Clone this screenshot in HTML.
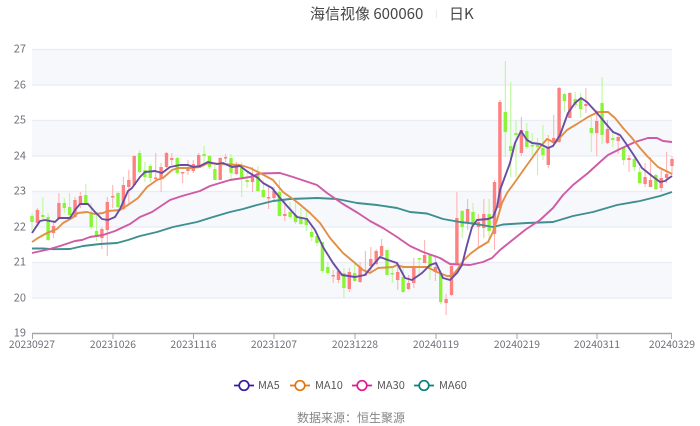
<!DOCTYPE html>
<html><head><meta charset="utf-8"><style>
html,body{margin:0;padding:0;background:#fff}
svg{display:block;filter:blur(.3px)}
text{font-family:"Noto Sans CJK SC","Liberation Sans",sans-serif}
</style></head><body>
<svg width="700" height="426" viewBox="0 0 700 426" xmlns="http://www.w3.org/2000/svg">
<rect width="700" height="426" fill="#fff"/>
<g fill="#f6f8fc">
<rect x="32" y="49.5" width="640" height="35.5"/>
<rect x="32" y="120.5" width="640" height="35.5"/>
<rect x="32" y="191.5" width="640" height="35.5"/>
<rect x="32" y="262.5" width="640" height="35.5"/>
</g>
<g stroke="#e8ecf5" stroke-width="1.2" fill="none">
<path d="M32 49.5H672M32 85H672M32 120.5H672M32 156H672M32 191.5H672M32 227H672M32 262.5H672M32 298H672"/>
</g>
<path d="M32 333.500H672" stroke="#a5a5a8" stroke-width="1.6" fill="none"/>
<path d="M32.5 334v5M113 334v5M193.5 334v5M274 334v5M355 334v5M436 334v5M517 334v5M597 334v5M671.500 334v5" stroke="#a5a5a8" stroke-width="1" fill="none"/>

<g font-size="11" fill="#6e7079" text-anchor="end">
<text x="26" y="52.500">27</text><text x="26" y="88.500">26</text><text x="26" y="123.500">25</text><text x="26" y="159.500">24</text>
<text x="26" y="194.500">23</text><text x="26" y="230.500">22</text><text x="26" y="265.500">21</text><text x="26" y="301.500">20</text><text x="26" y="336.500">19</text>
</g>
<g font-size="10.4" fill="#6e7079" text-anchor="middle">
<text x="32" y="348">20230927</text><text x="113" y="348">20231026</text><text x="193.500" y="348">20231116</text>
<text x="274" y="348">20231207</text><text x="355" y="348">20231228</text><text x="436" y="348">20240119</text>
<text x="517" y="348">20240219</text><text x="597" y="348">20240311</text><text x="672" y="348">20240329</text>
</g>

<!-- wicks -->
<path fill="none" stroke="#ffb4b4" stroke-width="1.1" d="M37.4 208V225M53.5 220V238M58.9 193V220M75 197V218M80.4 192V208M101.9 227V249M107.300 197V256M112.700 185V208M123.400 177V210M128.800 170V205M134.200 155V186M155.700 153V180M161.100 163V192M166.500 152V168M171.800 153V165M182.600 172V183M188 160V175M193.300 160V173M198.700 153V168M220.200 157V180M225.600 154V162M236.400 162V175M252.500 167V192M268.600 187V209M274 187V202M284.800 200V221M333.200 270V283M338.500 270V283M349.300 268V292M360.100 262V283M365.400 251V275M370.800 247V272M376.200 249V265M381.600 239V258M397.700 263V290M408.500 275V290M413.800 258V288M424.600 240V263M435.400 255V281M446.100 294V315M451.500 264V296M456.900 192V265M467.600 199V230M478.400 214V247M483.800 199V238M494.500 180V250M499.900 100V210M521.400 117V156M548.300 135V168M553.700 115V143M559.100 87V143M569.800 92V118M585.900 88V113M596.700 110V156M607.500 120V144M618.200 133V154M629 155V172M645.100 163V187M650.500 157V187M661.200 168V192M666.600 152V183M672 156V175"/>
<path fill="none" stroke="#bdf79c" stroke-width="1.1" d="M32 213V230M42.800 197V220M48.100 213V241M64.300 198V213M69.600 193V217M85.800 184V205M91.200 203V229M96.500 212V241M118 192V208M139.600 150V173M144.900 162V182M150.300 164V182M177.200 157V175M204.100 146V165M209.500 155V169M214.900 165V180M231 154V180M241.700 162V197M247.100 172V188M257.900 166V192M263.300 180V198M279.400 180V216M290.100 202V219M295.500 202V224M300.900 208V225M306.300 210V231M311.700 225V241M317 233V246M322.400 242V273M327.800 262V275M343.900 268V298M354.700 263V282M387 250V275M392.300 267V283M403.100 265V293M419.200 258V273M430 255V280M440.700 270V304M462.200 210V238M473 203V225M489.100 199V243M505.300 61V157M510.700 82V177M516 120V177M526.800 123V149M532.200 133V155M537.500 138V175M542.900 125V160M564.400 93V112M575.200 92V108M580.600 93V118M591.300 117V152M602.100 77V144M612.800 130V147M623.600 148V165M634.300 157V171M639.700 167V184M655.900 174V190"/>
<!-- bodies -->
<path fill="none" stroke="#ff8080" stroke-width="3.4" d="M37.4 210V223M53.5 226V233M58.9 203V218M75 200V217M80.4 196V205M101.900 229V238M107.300 202V230M112.700 196V197.500M123.400 185V209M128.800 180V187M134.200 156V185M155.700 177.500V179M161.100 167V178M166.500 153V167M171.800 158V160M182.600 172V173.500M188 168.500V171M193.300 164V171M198.700 155V165M220.200 158V180M225.600 157V158.500M236.400 167V174M252.500 175V182M268.600 197V198.500M274 191V198M284.800 214V216M333.200 275V276.500M338.500 271V280M349.300 272V289M360.100 267V282M365.400 274V275.500M370.800 259V266M376.200 251V264M381.600 246V256M397.700 272V280M408.500 283V289M413.800 267V283M424.600 255V263M435.400 267V272M446.100 299V303M451.500 266V295M456.900 218V265M467.600 209V223M478.400 222V227M483.800 214V228M494.500 182V234M499.900 102V208M521.400 130V153M548.300 147V165M553.700 138V143M559.100 88V142M569.800 93V118M585.900 104V106M596.700 121V133M607.500 129V143M618.200 137V141M629 158V160M645.100 177V184M650.500 180V187M661.200 178V188M666.600 174V178M672 159V166"/>
<path fill="none" stroke="#8af536" stroke-width="3.4" d="M32 216V222M42.800 215V217M48.100 217V240M64.300 203V208M69.600 207V215M85.800 195V203M91.200 213V227M96.500 231V237M118 193V207M139.600 153V172M144.900 170V177M150.300 166V178M177.200 158V173M204.100 154V156M209.500 156V167M214.900 169V180M231 158V173M241.700 168V177M247.100 180V182M257.900 173V191M263.300 190V197M279.400 192V216M290.100 212V217M295.500 215V222M300.900 218V224M306.300 218V225M311.700 232V237M317 236V243M322.400 242V271M327.800 267V273M343.900 273V288M354.700 273V281M387 250V275M392.300 273V274.500M403.100 277V292M419.200 258V259.500M430 255V267M440.700 273V302M462.200 211V227M473 212V225M489.100 214V231M505.300 112V132M510.700 146V151M516 133V135M526.800 131V147M532.200 145V146.500M537.500 145V147M542.900 148V155M564.400 94V101M575.200 99V105M580.600 99V109M591.300 128V133M602.100 103V135M612.800 138V140M623.600 148V160M634.300 159V167M639.700 172V183M655.900 175V189"/>

<!-- MA60 -->
<polyline fill="none" stroke="#3f8f90" stroke-width="1.9" stroke-linejoin="round" points="32,248.500 43,248.500 53,249.200 70,249 83,246 100,244 117,243 128,240 140,236 157,232 173,227 197,222 213,217 230,212 243,209 257,205 273,201 290,199 317,198 337,199 357,203 377,205 397,208 410,212 427,213.500 443,219 460,222 473,223.500 493,227 503,224.500 527,223 553,222 573,216 593,212 617,205 640,201 660,196 672,192"/>
<!-- MA30 -->
<polyline fill="none" stroke="#cf5aa5" stroke-width="1.9" stroke-linejoin="round" points="32,253 48,249.500 60,246 75,241 82,240 90,237 103,235 115,231 130,224 140,217 152,212 170,200 182,196 200,191 210,186 220,183 230,180 250,177 260,173.500 280,173 293,177 305,181 317,185 327,193 343,204 358,213 370,221 383,228 397,237 410,246 423,252 440,258 450,264 470,265 483,262 492,258 500,250 510,242 525,230 540,220 553,208 563,195 573,185 588,173 600,162 608,155 620,149 635,142 648,138 657,138 663,141 672,142"/>
<!-- MA10 -->
<polyline fill="none" stroke="#e28e45" stroke-width="1.9" stroke-linejoin="round" points="32,242 38,238 47,233 57,229 63,223 72,218 78,213 87,212 95,214 103,213 108,211 120,210 128,205 138,198 147,187 157,180 163,178 172,170 178,168 190,168 200,167 208,163 220,164 240,165 250,168 260,173 273,180 283,192 297,202 310,213 320,223 330,238 343,253 355,263 363,270 370,273 378,268 393,267 397,265 403,267 427,267 437,272 447,276 452,276 457,270 463,261 470,254 478,248 488,242 493,232 497,220 502,203 507,193 515,182 527,165 540,147 547,139 555,143 567,130 577,124 588,117 598,112 608,112 615,118 623,128 632,138 640,148 648,157 658,167 672,174"/>
<!-- MA5 -->
<polyline fill="none" stroke="#6a4da3" stroke-width="1.9" stroke-linejoin="round" points="32,233 40,221 45,220 55,222 59,218 70,218 75,210 80,204 88,204 95,212 102,219 108,220 115,217 120,209 128,191 132,188 140,177 145,172 155,171 162,173 170,167 180,165 188,165 193,167 200,166 208,162 217,164 223,163 232,167 240,166 248,172 258,178 263,183 272,188 280,198 288,207 297,217 307,219 315,230 323,247 333,263 342,275 355,277 365,275 373,265 380,257 388,260 397,263 405,278 412,280 422,273 430,265 436,263 443,278 450,280 457,273 462,265 467,245 472,227 477,220 488,219 493,217 497,207 500,190 510,163 515,143 521,131 527,140 532,143 540,144 548,148 553,146 560,135 568,113 575,103 581,98 587,102 597,113 607,125 613,132 620,135 627,145 635,157 642,168 652,176 660,182 665,181 672,176"/>

<!-- legend -->
<g fill="#fff" stroke-width="1.7">
<path d="M234 385.500H254" stroke="#3a1a9e"/><circle cx="244" cy="385.500" r="4.800" stroke="#3a1a9e"/>
<path d="M290 385.500H310" stroke="#e5760c"/><circle cx="300" cy="385.500" r="4.800" stroke="#e5760c"/>
<path d="M352 385.500H372" stroke="#dd1c90"/><circle cx="362" cy="385.500" r="4.800" stroke="#dd1c90"/>
<path d="M414 385.500H434" stroke="#0a8080"/><circle cx="424" cy="385.500" r="4.800" stroke="#0a8080"/>
</g>
<g font-size="11" fill="#555">
<text x="258" y="389">MA5</text><text x="315" y="389">MA10</text><text x="377" y="389">MA30</text><text x="439" y="389">MA60</text>
</g>
<text x="297" y="422" font-size="12" fill="#858585">数据来源：恒生聚源</text>

<!-- title -->
<text x="310" y="19" font-size="15" fill="#464646">海信视像 600060</text>
<path d="M436.500 10V18" stroke="#e8e8e8" stroke-width="1"/>
<text x="449" y="19" font-size="15" fill="#464646">日K</text>
</svg>
</body></html>
